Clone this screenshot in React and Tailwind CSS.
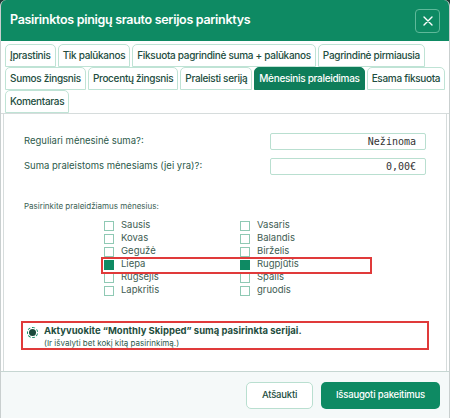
import React from "react";

const tabs1 = ["Įprastinis", "Tik palūkanos", "Fiksuota pagrindinė suma + palūkanos", "Pagrindinė pirmiausia"];
const tabs2 = ["Sumos žingsnis", "Procentų žingsnis", "Praleisti seriją", "Mėnesinis praleidimas", "Esama fiksuota"];
const allTabs = [...tabs1, ...tabs2, "Komentaras"];

const months = [
  ["Sausis", false, "Vasaris", false],
  ["Kovas", false, "Balandis", false],
  ["Gegužė", false, "Birželis", false],
  ["Liepa", true, "Rugpjūtis", true],
  ["Rugsėjis", false, "Spalis", false],
  ["Lapkritis", false, "gruodis", false],
];

function Box({ on }) {
  return on ? (
    <span className="w-[10px] h-[10px] bg-[#0e8a63] border border-[#0e8a63] inline-block shrink-0" />
  ) : (
    <span className="w-[10px] h-[10px] bg-white border border-[#8fc9b4] inline-block shrink-0" />
  );
}

export default function App() {
  return (
    <div className="w-[450px] h-[418px] bg-[#1c3b34] overflow-hidden" style={{ fontFamily: "Inter, 'Noto Sans', sans-serif" }}>
      <div className="w-full h-full bg-white rounded-t-[6px] overflow-hidden flex flex-col border-x border-[#c9cfcf]">
        {/* header */}
        <div className="h-[41px] bg-[#0e8a63] flex items-center justify-between pl-[9px] pr-[9px] shrink-0">
          <div className="text-white font-semibold text-[12.5px] tracking-[-0.3px]">Pasirinktos pinigų srauto serijos parinktys</div>
          <div className="w-[25px] h-[24px] rounded-[4px] border border-[#5fb99a] flex items-center justify-center">
            <svg width="10" height="10" viewBox="0 0 10 10"><path d="M1 1L9 9M9 1L1 9" stroke="white" strokeWidth="1.4" strokeLinecap="round" /></svg>
          </div>
        </div>

        {/* tabs */}
        <div className="pl-[4px] pr-0 pt-[3px] flex flex-wrap border-b border-[#d6dcdc]">
          {allTabs.map((t) => {
            const active = t === "Mėnesinis praleidimas";
            return (
              <div
                key={t}
                className={
                  "h-[23px] px-[4px] mr-[2px] flex items-center rounded-t-[5px] border text-[10px] tracking-[-0.3px] font-medium whitespace-nowrap " +
                  (active ? "bg-[#0e7d5a] border-[#0e7d5a] text-white" : "bg-white border-[#bfe3d5] text-[#224d40]")
                }
              >
                {t}
              </div>
            );
          })}
        </div>

        {/* content */}
        <div className="flex-1 mx-[2px] border-x border-[#d6dcdc] pt-[19px] text-[#2c5a4b]">
          <div className="flex items-center h-[17px] pl-[20px]">
            <div className="text-[9.5px] w-[246px]">Reguliari mėnesinė suma?:</div>
            <div className="w-[156px] h-[17px] border border-[#b9dfd0] rounded-[2px] flex items-center justify-end pr-[9px] text-[10px] text-[#333]" style={{ fontFamily: "'DejaVu Sans Mono', monospace" }}>Nežinoma</div>
          </div>
          <div className="flex items-center h-[17px] pl-[20px] mt-[8px]">
            <div className="text-[9.5px] w-[246px]">Suma praleistoms mėnesiams (jei yra)?:</div>
            <div className="w-[156px] h-[17px] border border-[#b9dfd0] rounded-[2px] flex items-center justify-end pr-[9px] text-[10px] text-[#333]" style={{ fontFamily: "'DejaVu Sans Mono', monospace" }}>0,00€</div>
          </div>

          <div className="pl-[20px] mt-[25px] text-[8px] text-[#3a6154]">Pasirinkite praleidžiamus mėnesius:</div>

          <div className="relative mt-[7px] pl-[100px]">
            {months.map(([a, aOn, b, bOn]) => (
              <div key={a} className="flex h-[13px] items-center text-[9.5px] text-[#3d5c52]">
                <div className="w-[136px] flex items-center gap-[7px]"><Box on={aOn} /><span>{a}</span></div>
                <div className="flex items-center gap-[7px]"><Box on={bOn} /><span>{b}</span></div>
              </div>
            ))}
            <div className="absolute left-[97px] top-[38px] w-[271px] h-[17px] border-2 border-[#e03a3a]" />
          </div>

          <div className="mt-[24px] ml-[17px] mr-[17px] h-[29px] border-2 border-[#e03a3a] flex items-start pt-[3px] pl-[4px]">
            <div className="w-[11px] h-[11px] mt-[1px] rounded-full border border-dashed border-[#0e8a63] flex items-center justify-center shrink-0">
              <div className="w-[7px] h-[7px] rounded-full bg-[#1b4a3c]" />
            </div>
            <div className="ml-[6px] leading-none">
              <div className="text-[9.5px] font-bold text-[#1f4e40]">Aktyvuokite “Monthly Skipped” sumą pasirinkta serijai.</div>
              <div className="text-[8px] text-[#2c5a4b] mt-[3px]">(Ir išvalyti bet kokį kitą pasirinkimą.)</div>
            </div>
          </div>
        </div>

        {/* footer */}
        <div className="h-[47px] shrink-0 border-t border-[#c6d6d2] bg-[#f5f9f9] flex items-center justify-end gap-[8px] pr-[9px]">
          <div className="h-[27px] w-[67px] rounded-[5px] border border-[#b9dfd0] bg-white flex items-center justify-center text-[9.5px] tracking-[-0.2px] font-medium text-[#224d40]">Atšaukti</div>
          <div className="h-[27px] w-[119px] rounded-[5px] bg-[#0e8a63] flex items-center justify-center text-[9.5px] tracking-[-0.2px] font-medium text-white">Išsaugoti pakeitimus</div>
        </div>
      </div>
    </div>
  );
}
